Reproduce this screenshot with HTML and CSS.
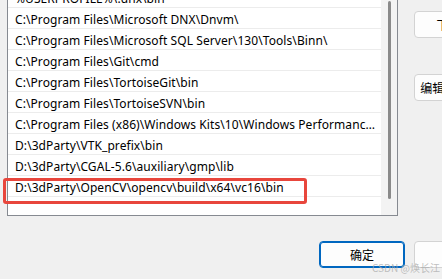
FILE: index.html
```html
<!DOCTYPE html>
<html lang="zh-CN">
<head>
    <meta charset="UTF-8">
    <meta name="viewport" content="width=device-width, initial-scale=1.0">
    <title>编辑环境变量</title>
    <link rel="stylesheet" href="styles.css">
</head>
<body>
    <div class="dialog">
        <div class="main">
            <div class="path-list">
                <div class="rows">
                    <div class="row">%USERPROFILE%\.dnx\bin</div>
                    <div class="row">C:\Program Files\Microsoft DNX\Dnvm\</div>
                    <div class="row">C:\Program Files\Microsoft SQL Server\130\Tools\Binn\</div>
                    <div class="row">C:\Program Files\Git\cmd</div>
                    <div class="row">C:\Program Files\TortoiseGit\bin</div>
                    <div class="row">C:\Program Files\TortoiseSVN\bin</div>
                    <div class="row">C:\Program Files (x86)\Windows Kits\10\Windows Performance Toolkit\</div>
                    <div class="row">D:\3dParty\VTK_prefix\bin</div>
                    <div class="row">D:\3dParty\CGAL-5.6\auxiliary\gmp\lib</div>
                    <div class="row">D:\3dParty\OpenCV\opencv\build\x64\vc16\bin</div>
                    <div class="row"></div>
                </div>
                <div class="scrollbar"><div class="thumb"></div></div>
            </div>
            <div class="side">
                <button class="btn">下移(O)</button>
                <button class="btn btn-far">编辑文本(T)...</button>
            </div>
        </div>
        <div class="footer">
            <button class="btn btn-primary">确定</button>
            <button class="btn">取消</button>
        </div>
        <!-- red mark drawn over the list -->
        <div class="mark"></div>
        <div class="watermark">CSDN @焕长江</div>
    </div>
</body>
</html>
```

FILE: styles.css
```css
html, body {
    margin: 0;
    overflow: hidden;
}

body {
    background: #f0f0f0;
    font-family: "Noto Sans", "Noto Sans CJK SC", sans-serif;
    font-size: 12px;
    color: #000;
}

.dialog {
    display: flow-root;
    position: relative;
    width: 508px;
    height: 279px;
}

.main {
    display: flex;
    align-items: flex-start;
    gap: 16px;
    margin-top: -14px;
    padding-left: 7px;
}

.path-list {
    display: flex;
    width: 389px;
    height: 228px;
    border: 1px solid #868a91;
    background: #fff;
    overflow: hidden;
}

.rows {
    flex: 1;
    min-width: 0;
}

.row {
    height: 18px;
    line-height: 20px;
    padding: 2px 4px 0 7px;
    border-bottom: 1px solid #ececec;
    letter-spacing: 0.08px;
    white-space: nowrap;
    overflow: hidden;
    text-overflow: ellipsis;
}

.scrollbar {
    width: 16px;
    background: #f3f3f3;
    padding-top: 14px;
}

.thumb {
    width: 3px;
    height: 198px;
    margin-left: 7px;
    border-radius: 2px;
    background: #8a8a8a;
}

.side {
    display: flex;
    flex-direction: column;
    padding-top: 25px;
}

.btn {
    width: 86px;
    height: 27px;
    padding: 0;
    border: 1px solid #d3d3d3;
    border-radius: 4px;
    background: #fdfdfd;
    font-family: "Noto Sans CJK SC", "Noto Sans", sans-serif;
    font-size: 12px;
    color: #000;
}

.btn-far {
    margin-top: 36px;
}

.footer {
    display: flex;
    justify-content: flex-end;
    gap: 9px;
    padding-right: 8px;
    margin-top: 25px;
}

.btn-primary {
    border: 1px solid #0067c0;
    box-shadow: inset 0 0 0 1px #0067c0;
}

.mark {
    position: absolute;
    left: 3px;
    top: 178px;
    width: 298px;
    height: 20px;
    border: 3px solid #e8463c;
    border-radius: 3px;
}

.watermark {
    position: absolute;
    left: 372px;
    top: 260px;
    font-family: "Noto Sans CJK SC", sans-serif;
    font-size: 10px;
    color: rgba(170, 170, 170, 0.75);
}
```
